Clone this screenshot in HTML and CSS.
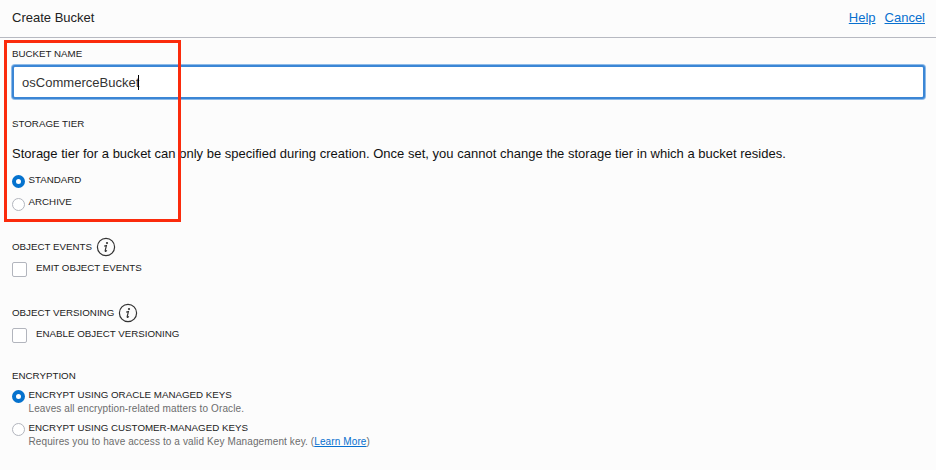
FILE: index.html
```html
<!DOCTYPE html>
<html lang="en">
<head>
<meta charset="utf-8">
<title>Create Bucket</title>
<link rel="stylesheet" href="styles.css">
</head>
<body>
<main class="dialog">
  <header class="header">
    <h1 class="title">Create Bucket</h1>
    <nav class="actions"><a href="#">Help</a><a href="#">Cancel</a></nav>
  </header>
  <form class="form">
    <label class="label name-label">BUCKET NAME</label>
    <div class="input"><span>osCommerceBucket</span><i class="caret"></i></div>

    <section class="tier">
      <h2 class="label">STORAGE TIER</h2>
      <p class="description">Storage tier for a bucket can only be specified during creation. Once set, you cannot change the storage tier in which a bucket resides.</p>
      <label class="option"><i class="radio checked"></i><span class="label standard">STANDARD</span></label>
      <label class="option"><i class="radio"></i><span class="label">ARCHIVE</span></label>
    </section>

    <section class="toggle">
      <h2 class="label heading"><span>OBJECT EVENTS</span>
        <svg class="info" viewBox="0 0 20 20"><circle cx="10" cy="10" r="8.6"/><circle class="dot" cx="11" cy="6" r="1.1"/><path d="M8.2 9.1l2.2-.5-1.2 5q-.1 1 .7.6l1-.8"/></svg>
      </h2>
      <label class="option"><i class="checkbox"></i><span class="label">EMIT OBJECT EVENTS</span></label>
    </section>

    <section class="toggle">
      <h2 class="label heading"><span>OBJECT VERSIONING</span>
        <svg class="info" viewBox="0 0 20 20"><circle cx="10" cy="10" r="8.6"/><circle class="dot" cx="11" cy="6" r="1.1"/><path d="M8.2 9.1l2.2-.5-1.2 5q-.1 1 .7.6l1-.8"/></svg>
      </h2>
      <label class="option"><i class="checkbox"></i><span class="label">ENABLE OBJECT VERSIONING</span></label>
    </section>

    <section class="encryption">
      <h2 class="label enc-label">ENCRYPTION</h2>
      <label class="option tall"><i class="radio checked"></i><span><span class="label">ENCRYPT USING ORACLE MANAGED KEYS</span><small class="hint">Leaves all encryption-related matters to Oracle.</small></span></label>
      <label class="option tall"><i class="radio"></i><span><span class="label">ENCRYPT USING CUSTOMER-MANAGED KEYS</span><small class="hint">Requires you to have access to a valid Key Management key. (<a href="#">Learn More</a>)</small></span></label>
    </section>
  </form>
  <div class="highlight"></div>
</main>
</body>
</html>
```
FILE: styles.css
```css
* { box-sizing: border-box; }
body { margin: 0; background: #fcfcfc; color: #222; font-family: "Liberation Sans", Arial, sans-serif; }
h1, h2, p { margin: 0; font-weight: 400; }
a { color: #0870cf; }
.dialog { position: relative; height: 470px; overflow: hidden; }
.header { display: flex; justify-content: space-between; height: 38px; padding: 0 11px 0 12px; border-bottom: 1px solid #b7b9c1; line-height: 35px; }
.title { font-size: 13px; }
.actions { display: flex; gap: 9px; font-size: 13px; }
.form { padding: 0 11px 0 12px; }
.label { display: block; font-size: 9.75px; line-height: 12px; white-space: nowrap; }
.name-label { padding-top: 10px; height: 27px; }
.input { display: flex; align-items: center; height: 34px; padding: 0 0 0 8px; border: 2px solid #3b86d5; border-radius: 3px; background: #fff; box-shadow: 0 0 0 1px #8dbae8; color: #333; font-size: 13px; letter-spacing: .02px; }
.caret { width: 1px; height: 15px; margin-left: -1px; background: #000; }
.tier { height: 138px; padding-top: 19px; }
.description { margin-top: 16px; height: 27px; color: #111; font-size: 13px; line-height: 15px; letter-spacing: .01px; white-space: nowrap; }
.option { display: flex; height: 23px; }
.radio { flex: none; width: 13px; height: 13px; margin: 2px 3.5px 0 0; border: 1px solid #b2b5bd; border-radius: 50%; background: #fff; }
.radio.checked { border: 4.5px solid #0572ce; }
.standard { padding-top: 1px; }
.toggle { height: 66px; }
.heading { display: flex; align-items: center; height: 20px; margin-bottom: 5px; }
.info { width: 20px; height: 20px; margin-left: 4px; fill: none; stroke: #333; stroke-width: 1.2; }
.info .dot { fill: #333; stroke: none; }
.checkbox { flex: none; width: 15px; height: 15px; margin: 0 9px 0 0; border: 1px solid #b2b5bd; border-radius: 2px; background: #fff; }
.encryption { padding-top: 1px; }
.enc-label { height: 19px; }
.tall { height: 33px; }
.tall .radio { margin-top: 1px; }
.hint { display: block; margin-top: 2px; color: #6c6c6c; font-size: 10px; line-height: 12px; letter-spacing: .115px; white-space: nowrap; }
.highlight { position: absolute; left: 4px; top: 40px; width: 177px; height: 182px; border: 3px solid #fb2b0c; }
```
